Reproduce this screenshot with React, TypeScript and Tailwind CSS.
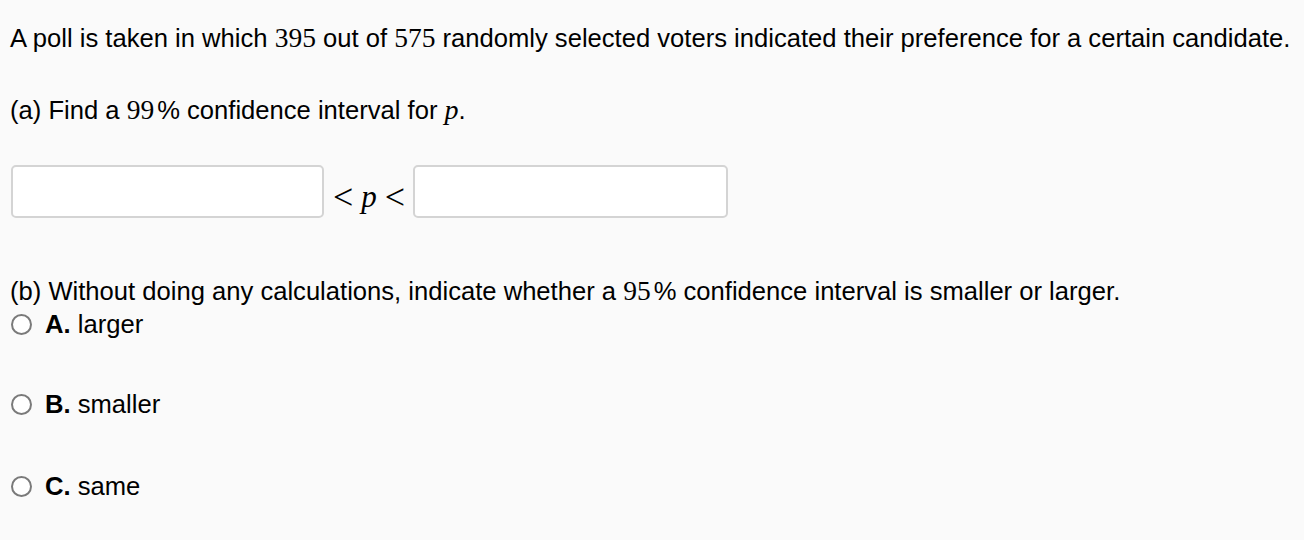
export default function App() {
  return (
    <div className="min-h-[540px] w-[1304px] bg-[#fafafa] text-black font-['Helvetica','Liberation_Sans',Arial,sans-serif] text-[25.6px]">
      <div className="pl-[10px] pt-[22px]">
        <p className="whitespace-nowrap leading-[32px]">
          A poll is taken in which <Num>395</Num> out of <Num>575</Num> randomly selected voters indicated their
          preference for a certain candidate.
        </p>

        <p className="mt-[40px] leading-[32px]">
          (a) Find a <Num>99</Num>
          <span className="ml-[3px]">%</span> confidence interval for <Var>p</Var>.
        </p>

        <div className="mt-[39px] flex items-center">
          <AnswerBox />
          <span className="ml-[9px] mr-[7px] flex items-center gap-[8px] pt-[10px] font-['Liberation_Serif',serif] leading-none">
            <span className="text-[36px]">&lt;</span>
            <i className="text-[31px]">p</i>
            <span className="text-[36px]">&lt;</span>
          </span>
          <AnswerBox wide />
        </div>

        <p className="mt-[57px] leading-[32px]">
          (b) Without doing any calculations, indicate whether a <Num>95</Num>
          <span className="ml-[3px]">%</span> confidence interval is smaller or larger.
        </p>

        <div className="mt-[1px] flex flex-col">
          <Choice letter="A." label="larger" />
          <Choice letter="B." label="smaller" className="mt-[48px]" />
          <Choice letter="C." label="same" className="mt-[50px]" />
        </div>
      </div>
    </div>
  );
}

function Num({ children }: { children: React.ReactNode }) {
  return <span className="font-['Liberation_Serif',serif] text-[27.5px]">{children}</span>;
}

function Var({ children }: { children: React.ReactNode }) {
  return <i className="font-['Liberation_Serif',serif] text-[28px]">{children}</i>;
}

function AnswerBox({ wide = false }: { wide?: boolean }) {
  return (
    <div
      className={`ml-[1px] h-[53px] ${wide ? "w-[315px]" : "w-[313px]"} rounded-[5px] border-2 border-[#d4d4d4] bg-white`}
    />
  );
}

function Choice({ letter, label, className = "" }: { letter: string; label: string; className?: string }) {
  return (
    <div className={`flex h-[32px] items-center ${className}`}>
      <span className="ml-[1px] h-[21px] w-[21px] rounded-full border-2 border-[#7a7a7a] bg-white" />
      <span className="ml-[13px]">
        <b>{letter}</b> {label}
      </span>
    </div>
  );
}
